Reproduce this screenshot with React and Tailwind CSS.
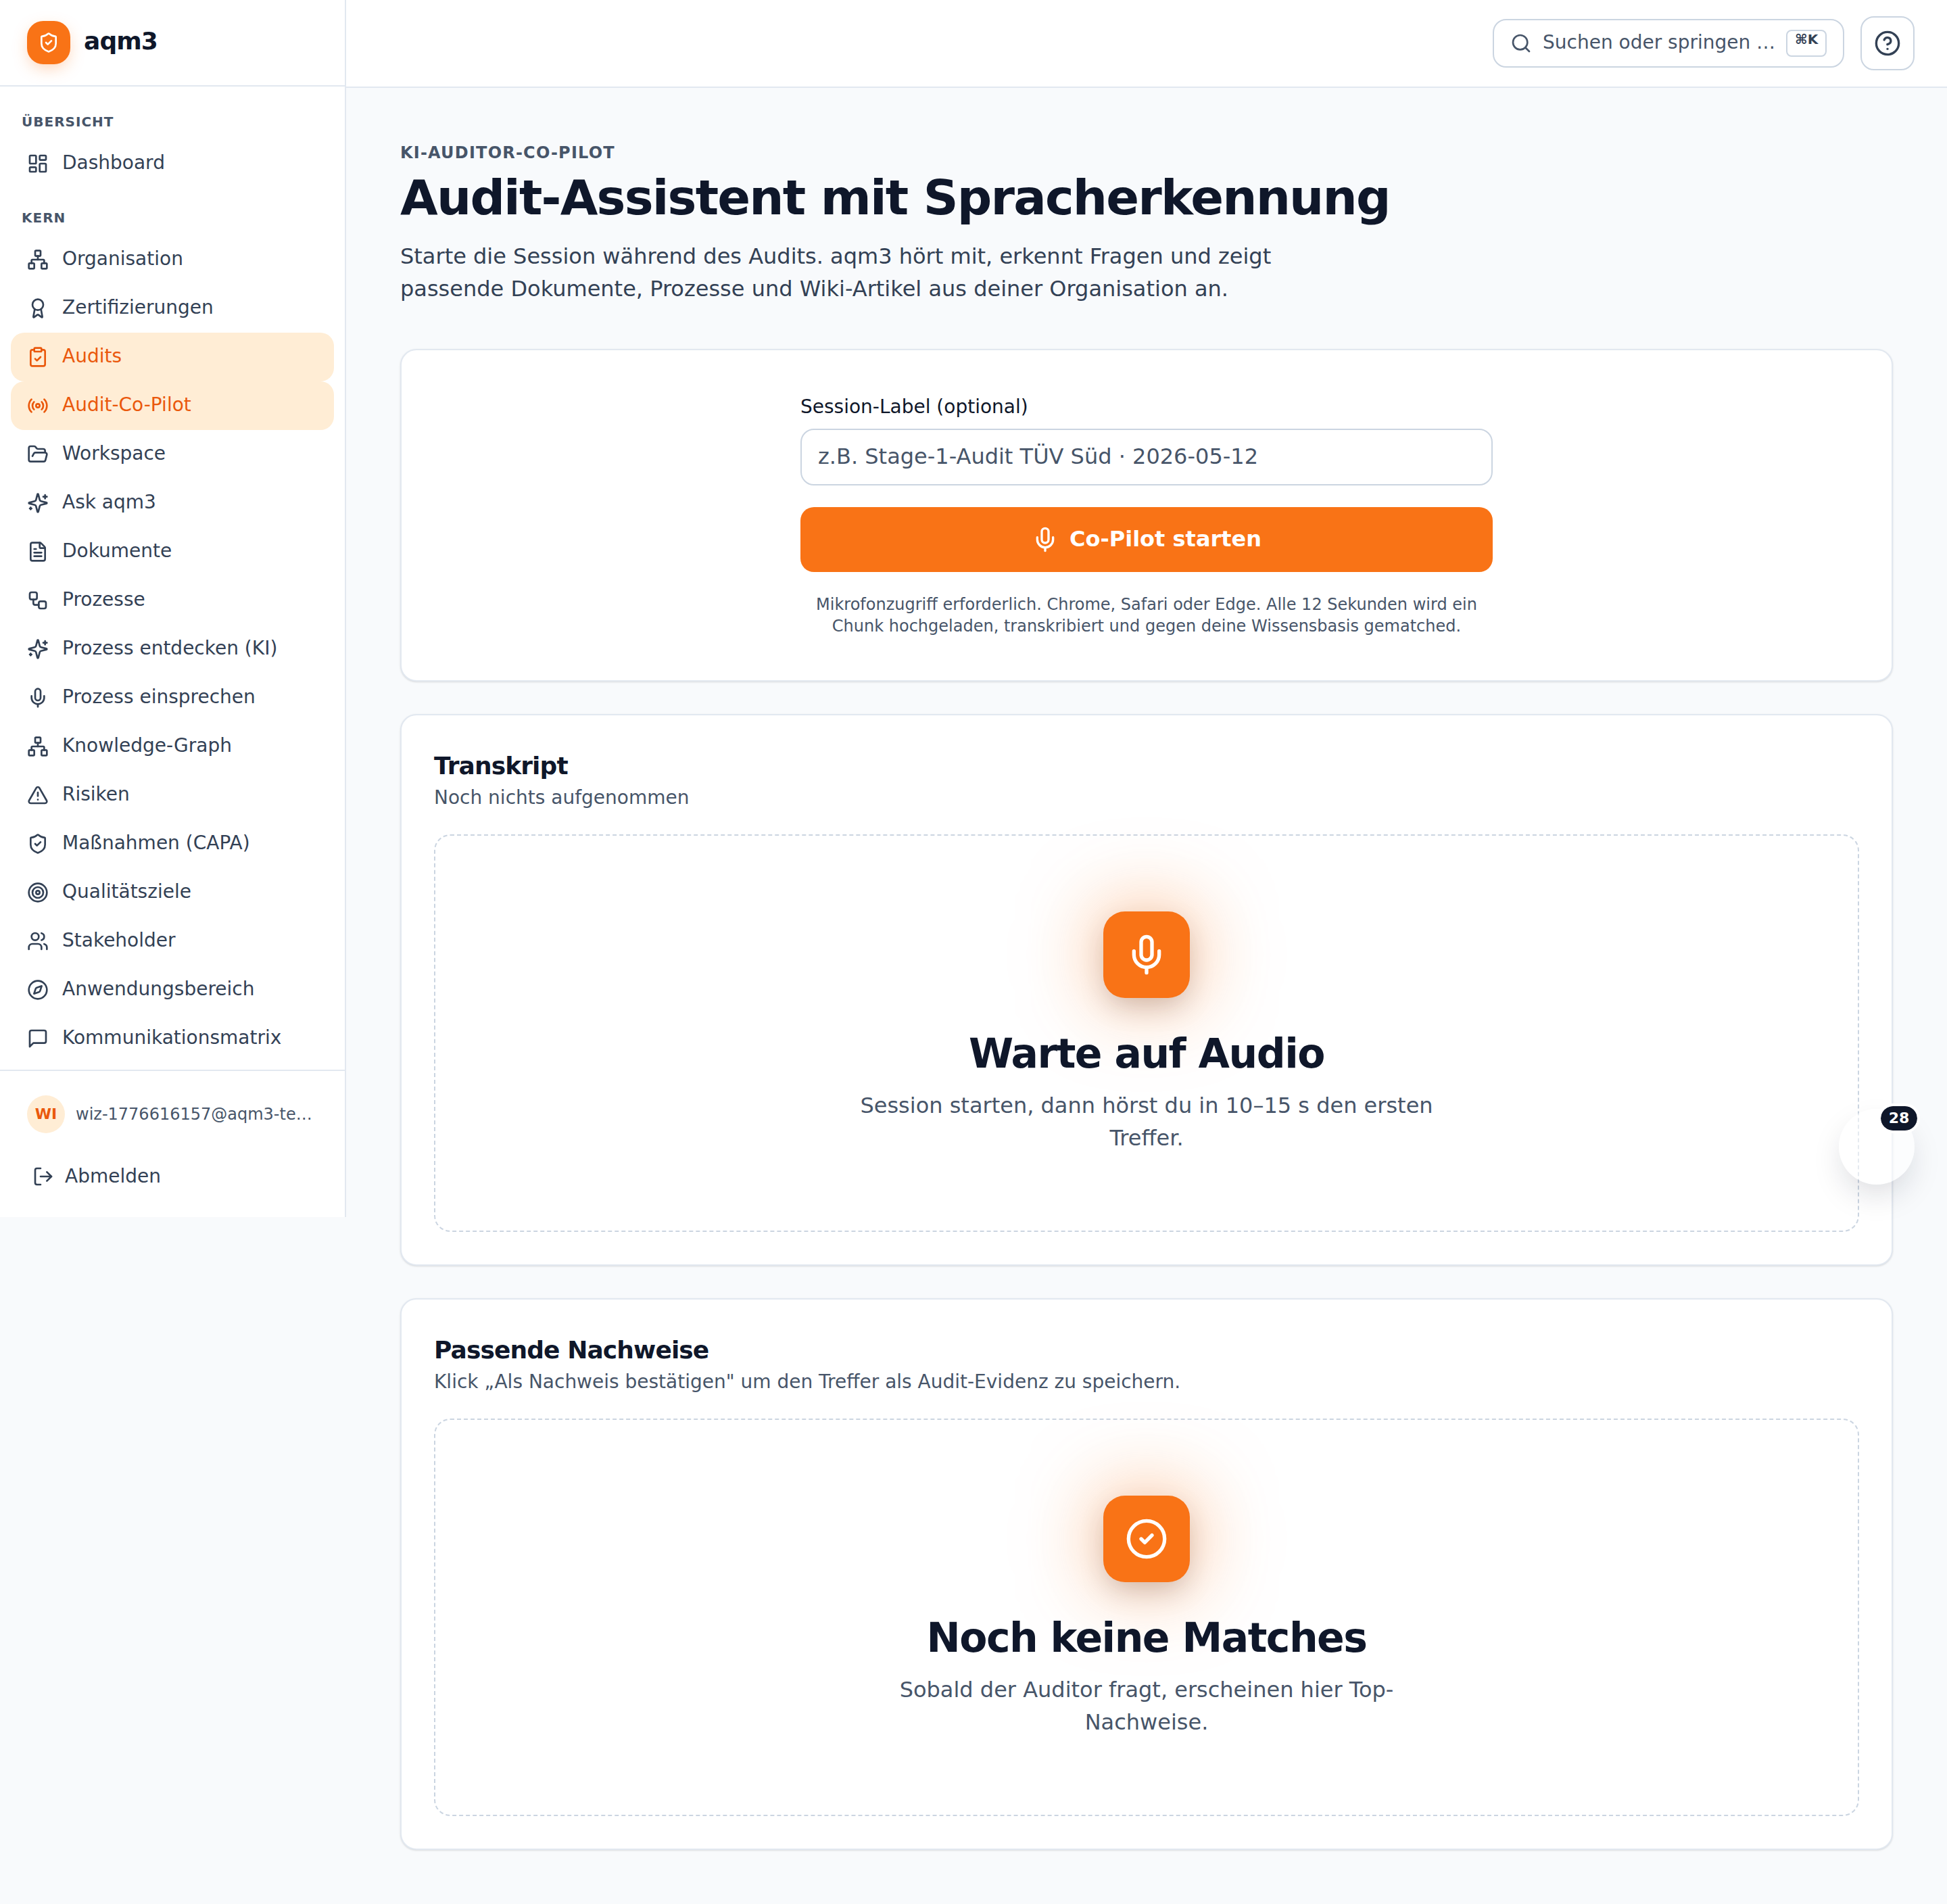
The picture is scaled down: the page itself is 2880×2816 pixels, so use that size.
import React from "react";
import {
  ShieldCheck, LayoutDashboard, Network, Award, ClipboardCheck, Radio, FolderOpen, FileText, Workflow, Mic,
  TriangleAlert, Target, Users, Compass, LogOut, Search, CircleHelp, CircleCheck,
} from "lucide-react";

function Svg({ size, strokeWidth, className, children }) {
  return (
    <svg
      width={size}
      height={size}
      viewBox="0 0 24 24"
      fill="none"
      stroke="currentColor"
      strokeWidth={strokeWidth}
      strokeLinecap="round"
      strokeLinejoin="round"
      className={className}
    >
      {children}
    </svg>
  );
}

function Sparkles(props) {
  return (
    <Svg {...props}>
      <path d="M9.937 15.5A2 2 0 0 0 8.5 14.063l-6.135-1.582a.5.5 0 0 1 0-.962L8.5 9.936A2 2 0 0 0 9.937 8.5l1.582-6.135a.5.5 0 0 1 .963 0L14.063 8.5A2 2 0 0 0 15.5 9.937l6.135 1.581a.5.5 0 0 1 0 .964L15.5 14.063a2 2 0 0 0-1.437 1.437l-1.582 6.135a.5.5 0 0 1-.963 0z" />
      <path d="M20 3v4" />
      <path d="M22 5h-4" />
      <path d="M4 17v2" />
      <path d="M5 18H3" />
    </Svg>
  );
}

function MessageSquare(props) {
  return (
    <Svg {...props}>
      <path d="M21 15a2 2 0 0 1-2 2H7l-4 4V5a2 2 0 0 1 2-2h14a2 2 0 0 1 2 2z" />
    </Svg>
  );
}

const kern = [
  [Network, "Organisation"],
  [Award, "Zertifizierungen"],
  [ClipboardCheck, "Audits", true],
  [Radio, "Audit-Co-Pilot", true],
  [FolderOpen, "Workspace"],
  [Sparkles, "Ask aqm3"],
  [FileText, "Dokumente"],
  [Workflow, "Prozesse"],
  [Sparkles, "Prozess entdecken (KI)"],
  [Mic, "Prozess einsprechen"],
  [Network, "Knowledge-Graph"],
  [TriangleAlert, "Risiken"],
  [ShieldCheck, "Maßnahmen (CAPA)"],
  [Target, "Qualitätsziele"],
  [Users, "Stakeholder"],
  [Compass, "Anwendungsbereich"],
  [MessageSquare, "Kommunikationsmatrix"],
];

function NavItem({ icon: Icon, label, active }) {
  return (
    <a
      className={
        active
          ? "flex h-[72px] items-center gap-5 rounded-[20px] bg-[#ffedd5] px-6 text-[28px] leading-10 text-[#ea580c]"
          : "flex h-[72px] items-center gap-5 rounded-[20px] px-6 text-[28px] leading-10 text-[#334155]"
      }
    >
      <Icon size={32} strokeWidth={2} className="shrink-0" />
      <span className="truncate pb-[2px]">{label}</span>
    </a>
  );
}

function SectionLabel({ children, className }) {
  return (
    <div className={"px-4 text-[20px] font-bold uppercase leading-[30px] tracking-[1px] text-[#475569] " + className}>
      {children}
    </div>
  );
}

function EmptyState({ icon: Icon, title, text }) {
  return (
    <div className="flex flex-col items-center rounded-[24px] border-2 border-dashed border-[#cbd5e1] px-12 py-28 text-center">
      <div className="flex h-32 w-32 items-center justify-center rounded-[32px] bg-[#f97316] text-white shadow-[0_0_120px_rgba(249,115,22,0.55),0_16px_40px_-8px_rgba(15,23,42,0.25)]">
        <Icon size={64} strokeWidth={2} />
      </div>
      <h3 className="mt-[46px] text-[60px] font-bold leading-[72px] tracking-[-1.5px] text-[#0f172a]">{title}</h3>
      <p className="mt-[17px] pb-px max-w-[896px] text-[32px] leading-12 text-[#475569]">{text}</p>
    </div>
  );
}

export default function App() {
  return (
    <div className="relative flex min-h-[2816px] bg-[#f8fafc] font-['DejaVu_Sans',sans-serif]">
      <aside className="flex h-[1800px] w-[512px] shrink-0 flex-col border-r-2 border-[#e2e8f0] bg-white">
        <div className="flex h-[128px] shrink-0 items-center gap-5 border-b-2 border-[#e2e8f0] px-10">
          <div className="flex h-16 w-16 items-center justify-center rounded-3xl bg-[#f97316] text-white shadow-[0_8px_24px_-4px_rgba(249,115,22,0.35)]">
            <ShieldCheck size={32} strokeWidth={2} />
          </div>
          <span className="pb-1 text-[36px] font-bold leading-none tracking-[-0.9px] text-[#0f172a]">aqm3</span>
        </div>
        <nav className="min-h-0 flex-1 overflow-hidden px-4 pt-[37px]">
          <SectionLabel className="mb-[11px]">Übersicht</SectionLabel>
          <NavItem icon={LayoutDashboard} label="Dashboard" />
          <SectionLabel className="mb-[11px] mt-[29px]">Kern</SectionLabel>
          {kern.map(([icon, label, active]) => (
            <NavItem key={label} icon={icon} label={label} active={active} />
          ))}
        </nav>
        <div className="shrink-0 border-t-2 border-[#e2e8f0] px-10 pb-8 pt-9">
          <div className="flex items-center gap-4">
            <div className="flex h-14 w-14 shrink-0 items-center justify-center rounded-full bg-[#ffedd5] pb-[2px] text-[22px] font-bold text-[#ea580c]">
              WI
            </div>
            <span className="truncate text-[24px] leading-8 text-[#475569]">wiz-1776616157@aqm3-test.example</span>
          </div>
          <button className="mt-9 flex h-14 items-center gap-4 pl-2 text-[28px] text-[#334155]">
            <LogOut size={32} strokeWidth={2} />
            <span>Abmelden</span>
          </button>
        </div>
      </aside>

      <div className="min-w-0 flex-1">
        <header className="flex h-[130px] items-center justify-end gap-6 border-b-2 border-[#e2e8f0] bg-white pr-12">
          <button className="flex h-[72px] w-[520px] items-center gap-4 rounded-[20px] border-2 border-[#cbd5e1] bg-white pl-6 pr-6 text-[28px] text-[#475569]">
            <Search size={32} strokeWidth={2} className="shrink-0" />
            <span className="flex-1 whitespace-nowrap pb-[2px] text-left">Suchen oder springen …</span>
            <kbd className="flex h-10 w-[60px] shrink-0 justify-center rounded-lg border-2 border-[#cbd5e1] font-['DejaVu_Sans',sans-serif] text-[20px] font-bold leading-6 text-[#334155]">
              ⌘K
            </kbd>
          </button>
          <button className="flex h-20 w-20 items-center justify-center rounded-[20px] border-2 border-[#cbd5e1] bg-white text-[#334155]">
            <CircleHelp size={40} strokeWidth={2} />
          </button>
        </header>

        <main className="px-20 pb-20 pt-20">
          <div className="text-[24px] font-bold uppercase leading-8 tracking-[1.2px] text-[#475569]">KI-Auditor-Co-Pilot</div>
          <h1 className="mt-[10px] text-[72px] font-bold leading-20 tracking-[-1.8px] text-[#0f172a]">Audit-Assistent mit Spracherkennung</h1>
          <p className="mt-[23px] max-w-[1344px] text-[32px] leading-12 text-[#334155]">
            Starte die Session während des Audits. aqm3 hört mit, erkennt Fragen und zeigt passende Dokumente, Prozesse und Wiki-Artikel aus deiner Organisation an.
          </p>

          <section className="mt-[65px] rounded-[24px] border-2 border-[#e2e8f0] bg-white p-16 shadow-sm">
            <div className="mx-auto w-[1024px]">
              <label className="block text-[28px] leading-10 text-[#0f172a]">Session-Label (optional)</label>
              <input
                placeholder="z.B. Stage-1-Audit TÜV Süd · 2026-05-12"
                className="mt-3 block h-[84px] w-full rounded-[20px] border-2 border-[#cbd5e1] bg-white px-6 pb-[2px] text-[32px] placeholder:text-[#475569]"
              />
              <button className="mt-8 flex h-24 w-full items-center justify-center gap-4 rounded-[20px] bg-[#f97316] text-[32px] font-bold text-white">
                <Mic size={40} strokeWidth={2} />
                <span className="pb-[2px]">Co-Pilot starten</span>
              </button>
              <p className="mt-8 text-center text-[24px] leading-8 text-[#475569]">
                Mikrofonzugriff erforderlich. Chrome, Safari oder Edge. Alle 12 Sekunden wird ein Chunk hochgeladen, transkribiert und gegen deine Wissensbasis gematched.
              </p>
            </div>
          </section>

          <section className="mt-12 rounded-[24px] border-2 border-[#e2e8f0] bg-white p-12 shadow-sm">
            <h2 className="text-[36px] font-bold leading-[54px] tracking-[-0.9px] text-[#0f172a]">Transkript</h2>
            <p className="text-[28px] leading-10 text-[#475569]">Noch nichts aufgenommen</p>
            <div className="mt-[34px]">
              <EmptyState icon={Mic} title="Warte auf Audio" text="Session starten, dann hörst du in 10–15 s den ersten Treffer." />
            </div>
          </section>

          <section className="mt-12 rounded-[24px] border-2 border-[#e2e8f0] bg-white p-12 shadow-sm">
            <h2 className="text-[36px] font-bold leading-[54px] tracking-[-0.9px] text-[#0f172a]">Passende Nachweise</h2>
            <p className="text-[28px] leading-10 text-[#475569]">Klick „Als Nachweis bestätigen" um den Treffer als Audit-Evidenz zu speichern.</p>
            <div className="mt-[34px]">
              <EmptyState icon={CircleCheck} title="Noch keine Matches" text="Sobald der Auditor fragt, erscheinen hier Top-Nachweise." />
            </div>
          </section>
        </main>
      </div>

      <div className="absolute right-12 top-[1640px] h-28 w-28 rounded-full bg-white/50 shadow-[0_20px_50px_-10px_rgba(15,23,42,0.18)]">
        <span className="absolute -right-1 -top-1 flex h-9 min-w-[54px] items-center justify-center rounded-full bg-[#0f172a] px-2 text-[22px] font-bold leading-none text-white outline-4 outline-white">
          28
        </span>
      </div>
    </div>
  );
}
